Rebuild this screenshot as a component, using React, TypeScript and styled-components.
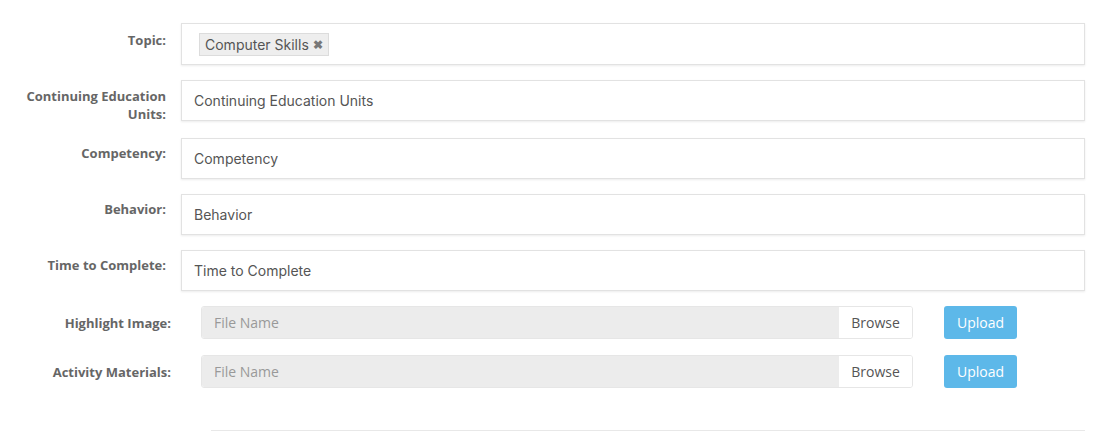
import styled, { createGlobalStyle } from 'styled-components';

const GlobalStyle = createGlobalStyle`
  body {
    margin: 0;
    background: #fff;
    font-family: "Open Sans", "Liberation Sans", sans-serif;
  }
`;

const Form = styled.form`
  padding: 23px 29px 0 0;
`;

const Row = styled.div`
  display: grid;
  grid-template-columns: 166px 1fr;
  column-gap: 15px;
  margin-bottom: 15px;
  align-items: start;
`;

const Label = styled.label<{ $top?: number }>`
  display: block;
  text-align: right;
  font-family: "Open Sans", sans-serif;
  font-weight: 700;
  font-size: 13px;
  line-height: 18px;
  color: #666;
  padding-top: ${(p) => p.$top ?? 6}px;
`;

const TextField = styled.div<{ $tall?: boolean }>`
  box-sizing: border-box;
  height: ${(p) => (p.$tall ? 42 : 41)}px;
  border: 1px solid #e2e2e2;
  box-shadow: 0 1px 2px rgba(0, 0, 0, 0.08);
  background: #fff;
  display: flex;
  align-items: center;
  padding: 0 12px;
  font-family: Inter, "Noto Sans", sans-serif;
  font-size: 14px;
  color: #555;
`;

const Tag = styled.span`
  display: inline-flex;
  align-items: center;
  gap: 4px;
  height: 23px;
  box-sizing: border-box;
  padding: 0 5px;
  margin-left: 5px;
  background: #eeeeee;
  border: 1px solid #dcdcdc;
  font-size: 14px;
  color: #555;
`;

const Remove = styled.span`
  font-size: 12px;
  font-weight: 700;
  color: #777;
`;

const FileRow = styled.div`
  display: flex;
  align-items: center;
  margin-bottom: 16px;
`;

const FileLabel = styled.label`
  width: 171px;
  flex: none;
  text-align: right;
  font-weight: 700;
  font-size: 13px;
  color: #666;
  margin-right: 30px;
`;

const FileBox = styled.div`
  display: flex;
  width: 712px;
  height: 33px;
  box-sizing: border-box;
  border: 1px solid #e6e6e6;
  border-radius: 3px;
  overflow: hidden;
`;

const FileName = styled.div`
  flex: 1;
  background: #ececec;
  display: flex;
  align-items: center;
  padding-left: 12px;
  font-size: 14px;
  color: #999;
`;

const Browse = styled.div`
  width: 73px;
  background: #fff;
  display: flex;
  align-items: center;
  justify-content: center;
  font-size: 14px;
  color: #555;
`;

const UploadButton = styled.button`
  margin-left: 31px;
  width: 73px;
  height: 33px;
  border: none;
  border-radius: 3px;
  background: #5db8e9;
  color: #fff;
  font-family: "Open Sans", sans-serif;
  font-size: 14px;
  padding: 0;
`;

const Divider = styled.hr`
  margin: 42px 29px 0 211px;
  border: none;
  border-top: 1px solid #e8e8e8;
`;

const fields = ['Competency', 'Behavior', 'Time to Complete'];

export default function App() {
  return (
    <>
      <GlobalStyle />
      <Form>
        <Row>
          <Label $top={8}>Topic:</Label>
          <TextField $tall>
            <Tag>
              Computer Skills <Remove>✖</Remove>
            </Tag>
          </TextField>
        </Row>
        <Row>
          <Label $top={7}>
            Continuing Education
            <br />
            Units:
          </Label>
          <TextField>Continuing Education Units</TextField>
        </Row>
        {fields.map((f) => (
          <Row key={f}>
            <Label>{f}:</Label>
            <TextField>{f}</TextField>
          </Row>
        ))}
        <FileRow>
          <FileLabel>Highlight Image:</FileLabel>
          <FileBox>
            <FileName>File Name</FileName>
            <Browse>Browse</Browse>
          </FileBox>
          <UploadButton type="button">Upload</UploadButton>
        </FileRow>
        <FileRow>
          <FileLabel>Activity Materials:</FileLabel>
          <FileBox>
            <FileName>File Name</FileName>
            <Browse>Browse</Browse>
          </FileBox>
          <UploadButton type="button">Upload</UploadButton>
        </FileRow>
      </Form>
      <Divider />
    </>
  );
}
